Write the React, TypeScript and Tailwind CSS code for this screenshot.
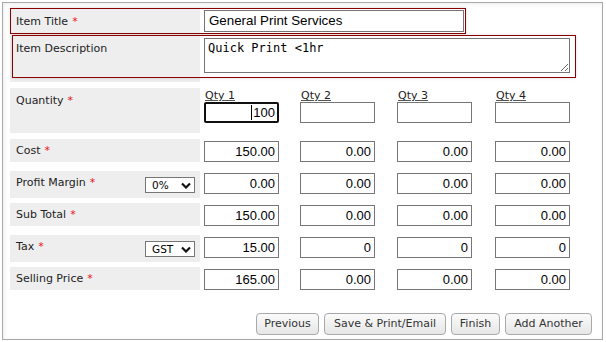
const label = "font-['DejaVu_Sans',sans-serif] text-[11px] leading-[13px] text-[#222]";
const num =
  "w-[75px] h-[21px] border border-[#767676] bg-white px-[3px] text-right font-['Liberation_Sans',Arial,sans-serif] text-[13px] leading-[19px] text-black";

const Star = () => <span className="ml-[4px] text-[#e5141b]">*</span>;

const Chevron = () => (
  <svg width="10" height="7" viewBox="0 0 10 7" className="block">
    <polyline points="1,1.5 5,5.5 9,1.5" fill="none" stroke="#111" strokeWidth="2.2" />
  </svg>
);

const FakeSelect = ({ value }: { value: string }) => (
  <div className="mt-[6px] flex h-[16px] w-[50px] items-center justify-between border border-[#767676] bg-white pl-[6px] pr-[3px] font-['DejaVu_Sans',sans-serif] text-[10.5px] leading-[14px] text-black">
    <span>{value}</span>
    <Chevron />
  </div>
);

const colW = ["w-[96px]", "w-[97px]", "w-[98px]", "w-[76px]"];

const Cells = ({ values }: { values: string[] }) => (
  <div className="ml-[4px] flex pt-[2px]">
    {values.map((v, i) => (
      <div key={i} className={colW[i]}>
        <div className={num}>{v}</div>
      </div>
    ))}
  </div>
);

const rows: { name: string; select?: string; values: string[] }[] = [
  { name: "Cost", values: ["150.00", "0.00", "0.00", "0.00"] },
  { name: "Profit Margin", select: "0%", values: ["0.00", "0.00", "0.00", "0.00"] },
  { name: "Sub Total", values: ["150.00", "0.00", "0.00", "0.00"] },
  { name: "Tax", select: "GST", values: ["15.00", "0", "0", "0"] },
  { name: "Selling Price", values: ["165.00", "0.00", "0.00", "0.00"] },
];

const btn =
  "h-[22px] rounded-[4px] border border-[#a9a9a9] bg-gradient-to-b from-[#fbfbfb] to-[#e6e6e6] font-['DejaVu_Sans',sans-serif] text-[11px] text-[#333]";

export default function App() {
  return (
    <div className="h-[342px] w-[606px] bg-white pl-[2px] pt-[2px]">
      <div className="h-[338px] w-[601px] border border-[#a8a8a8] pl-[7px] pt-[5px] shadow-[inset_1px_1px_4px_rgba(0,0,0,0.08)]">
        {/* title */}
        <div className="flex h-[26px] w-[456px] border border-[#8b0000] shadow-[0_0_3px_rgba(0,0,0,0.15)]">
          <div className={`flex w-[189px] items-center bg-[#eee] pl-[5px] ${label}`}>
            <span>Item Title</span>
            <Star />
          </div>
          <div className="ml-[4px] mt-[1px] h-[22px] w-[260px] border border-[#767676] bg-white pl-[4px] font-['Liberation_Sans',Arial,sans-serif] text-[13.33px] leading-[20px] text-black">
            General Print Services
          </div>
        </div>

        {/* description */}
        <div className="flex h-[48px] bg-[linear-gradient(to_right,#eee_190px,transparent_190px)]">
          <div className="ml-[2px] mt-[1px] flex h-[43px] w-[564px] border border-[#8b0000] shadow-[0_0_3px_rgba(0,0,0,0.15)]">
            <div className="w-[187px] bg-[#eee]">
              <div className={`pl-[3px] pt-[6px] ${label}`}>Item Description</div>
            </div>
            <textarea
              readOnly
              defaultValue="Quick Print <1hr"
              className="ml-[4px] mt-[2px] h-[35px] w-[366px] border border-[#767676] bg-white px-[3px] py-[2px] font-['DejaVu_Sans_Mono',monospace] text-[12px] leading-[15px] text-black outline-none"
            />
          </div>
        </div>

        {/* quantity */}
        <div className="mt-[6px] flex h-[45px]">
          <div className={`flex w-[190px] items-start bg-[#eee] pl-[6px] pt-[6px] ${label}`}>
            <span>Quantity</span>
            <Star />
          </div>
          <div className="ml-[4px] flex pt-[1px]">
            {["Qty 1", "Qty 2", "Qty 3", "Qty 4"].map((q, i) => (
              <div key={q} className={colW[i]}>
                <div className={`${label} pl-[1px] text-[#111] underline decoration-[#555] underline-offset-[1px]`}>{q}</div>
                {i === 0 ? (
                  <div className="flex h-[21px] w-[75px] items-center justify-end rounded-[2px] border-2 border-[#101010] bg-white pr-[2px] font-['Liberation_Sans',Arial,sans-serif] text-[13px] text-black">
                    <span className="mr-[1px] inline-block h-[15px] w-px bg-black" />
                    100
                  </div>
                ) : (
                  <div className={num} />
                )}
              </div>
            ))}
          </div>
        </div>

        {/* values */}
        <div className="mt-[6px] flex flex-col">
          {rows.map((r) => (
            <div key={r.name} className="flex h-[32px] items-start">
              <div
                className={`flex w-[190px] justify-between bg-[#eee] pl-[6px] pr-[5px] ${r.select ? "h-[27px]" : "h-[23px]"}`}
              >
                <div className={`flex items-start pt-[5px] ${label}`}>
                  <span>{r.name}</span>
                  <Star />
                </div>
                {r.select && <FakeSelect value={r.select} />}
              </div>
              <Cells values={r.values} />
            </div>
          ))}
        </div>

        {/* buttons */}
        <div className="mt-[14px] flex justify-end gap-[5px] pr-[10px]">
          <button className={`${btn} w-[63px]`}>Previous</button>
          <button className={`${btn} w-[122px]`}>Save &amp; Print/Email</button>
          <button className={`${btn} w-[49px]`}>Finish</button>
          <button className={`${btn} w-[87px]`}>Add Another</button>
        </div>
      </div>
    </div>
  );
}
